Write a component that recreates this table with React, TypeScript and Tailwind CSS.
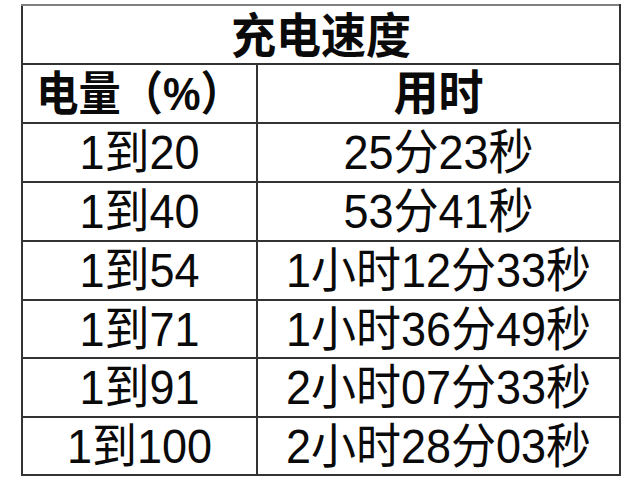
import * as React from "react"

const rows: [string, string][] = [
    ["1到20", "25分23秒"],
    ["1到40", "53分41秒"],
    ["1到54", "1小时12分33秒"],
    ["1到71", "1小时36分49秒"],
    ["1到91", "2小时07分33秒"],
    ["1到100", "2小时28分03秒"],
]

const heights = ["h-[59px]", "h-[59px]", "h-[59px]", "h-[58px]", "h-[59px]", "h-[58px]"]

export default function App() {
    return (
        <div className="w-[640px] h-[480px] bg-white pt-[4px] pl-[21px] font-['Liberation_Sans','Noto_Sans_CJK_SC',sans-serif] text-[#0a0a0a]">
            <table className="w-[598px] border-collapse table-fixed">
                <colgroup>
                    <col className="w-[235px]" />
                    <col className="w-[363px]" />
                </colgroup>
                <tbody>
                    <tr className="h-[59px]">
                        <td colSpan={2} className="border-2 border-[#333] border-t-[#808080] text-center align-middle text-[45px] font-bold leading-none">
                            <span className="inline-block scale-y-[1.06] translate-y-[2px]">充电速度</span>
                        </td>
                    </tr>
                    <tr className="h-[59px]">
                        <td className="border-2 border-[#333] text-center align-middle text-[44px] font-bold leading-none">
                            <span className="inline-block scale-y-[1.06] scale-x-[0.96]">电量（%）</span>
                        </td>
                        <td className="border-2 border-[#333] text-center align-middle text-[45px] font-bold leading-none">
                            <span className="inline-block scale-y-[1.06]">用时</span>
                        </td>
                    </tr>
                    {rows.map(([a, b], i) => (
                        <tr key={a} className={heights[i]}>
                            <td className="border-2 border-[#333] text-center align-middle text-[45px] leading-none">
                                <span className="inline-block scale-y-[1.07]">{a}</span>
                            </td>
                            <td className="border-2 border-[#333] text-center align-middle text-[45px] leading-none">
                                <span className="inline-block scale-y-[1.07]">{b}</span>
                            </td>
                        </tr>
                    ))}
                </tbody>
            </table>
        </div>
    )
}
